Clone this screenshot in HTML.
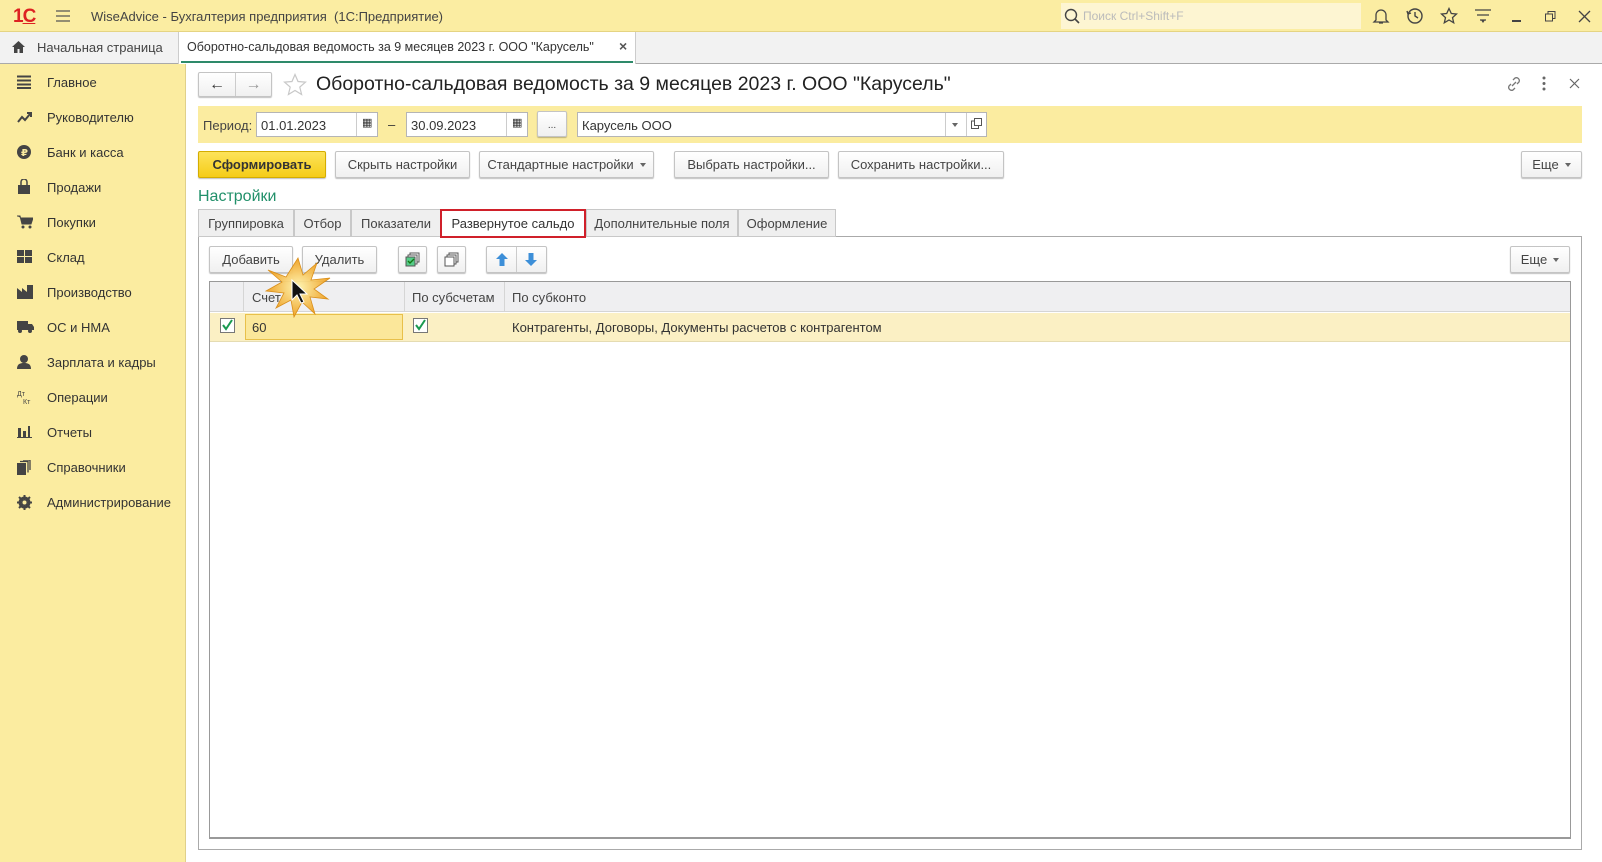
<!DOCTYPE html>
<html><head><meta charset="utf-8"><style>
*{box-sizing:border-box;margin:0;padding:0}
body{width:1602px;height:862px;overflow:hidden;background:#fff;font-family:"Liberation Sans","DejaVu Sans",sans-serif;font-size:13px;color:#333;position:relative}
.a{position:absolute}
.btn{position:absolute;border:1px solid #c4c4c4;border-radius:2px;background:linear-gradient(#fff,#f0f0f0);box-shadow:0 1px 1px rgba(0,0,0,.25);display:flex;align-items:center;justify-content:center;font-size:13px;color:#444;height:27px}
.inp{position:absolute;border:1px solid #b5b5b5;background:#fff;height:25px;font-size:13px;padding:5px 4px;color:#333}
.side div{position:absolute;left:47px;font-size:13px;color:#333}
.side svg{position:absolute;left:17px}
.tab{position:absolute;top:209px;height:28px;border:1px solid #c8c8c8;background:#efefef;font-size:13px;color:#444;display:flex;align-items:center;justify-content:center}
.caret{display:inline-block;border-left:3px solid transparent;border-right:3px solid transparent;border-top:4px solid #666;margin-left:6px;vertical-align:middle}
</style></head><body>
<!-- title bar -->
<div class="a" style="left:0;top:0;width:1602px;height:32px;background:#fbeda2;border-bottom:1px solid #e5d483"></div>
<div class="a" style="left:13px;top:6px;font:bold 19px 'Liberation Sans';color:#d22;letter-spacing:-1px">1<span style="text-decoration:underline">С</span></div>
<svg class="a" style="left:56px;top:10px" width="14" height="12"><path d="M0 1h14M0 6h14M0 11h14" stroke="#555" stroke-width="1.3"/></svg>
<div class="a" style="left:91px;top:9px;font-size:13px;color:#444">WiseAdvice - Бухгалтерия предприятия &nbsp;(1С:Предприятие)</div>
<div class="a" style="left:1061px;top:3px;width:300px;height:26px;background:#fdf5d2"></div>
<svg class="a" style="left:1064px;top:8px" width="16" height="16"><circle cx="7" cy="7" r="5.5" fill="none" stroke="#444" stroke-width="1.4"/><path d="M11 11l4 4" stroke="#444" stroke-width="1.6"/></svg>
<div class="a" style="left:1083px;top:9px;font-size:12px;color:#bbb">Поиск Ctrl+Shift+F</div>
<svg class="a" style="left:1372px;top:7px" width="18" height="18"><path d="M4 13V8a5 5 0 0 1 10 0v5l2 2H2zM7 16h4" fill="none" stroke="#444" stroke-width="1.3"/></svg>
<svg class="a" style="left:1406px;top:7px" width="18" height="18"><circle cx="9" cy="9" r="7" fill="none" stroke="#444" stroke-width="1.4"/><path d="M9 5v4l3 2M1 4l1 3 3-1" fill="none" stroke="#444" stroke-width="1.4"/></svg>
<svg class="a" style="left:1440px;top:7px" width="18" height="18"><path d="M9 1.5l2.3 5 5.2.5-4 3.6 1.2 5.2L9 13l-4.7 2.8 1.2-5.2-4-3.6 5.2-.5z" fill="none" stroke="#444" stroke-width="1.3"/></svg>
<svg class="a" style="left:1474px;top:8px" width="18" height="16"><path d="M1 2h16M3 7h12M6 12h6" stroke="#444" stroke-width="1.3"/><path d="M7 12l2 3 2-3z" fill="#444"/></svg>
<div class="a" style="left:1512px;top:20px;width:9px;height:1.5px;background:#444"></div>
<svg class="a" style="left:1545px;top:11px" width="11" height="11"><rect x="0.5" y="3" width="7" height="7" fill="none" stroke="#444"/><path d="M3 3V0.5h7v7H8" fill="none" stroke="#444"/></svg>
<svg class="a" style="left:1578px;top:10px" width="13" height="13"><path d="M1 1l11 11M12 1L1 12" stroke="#444" stroke-width="1.3"/></svg>
<!-- tab strip -->
<div class="a" style="left:0;top:32px;width:1602px;height:32px;background:#f2f2f2;border-bottom:1px solid #aaa"></div>
<svg class="a" style="left:11px;top:40px" width="15" height="14"><path d="M7.5 1L1 7h2v6h3.5V9h2v4H12V7h2z" fill="#444"/></svg>
<div class="a" style="left:37px;top:40px;font-size:13px;color:#444">Начальная страница</div>
<div class="a" style="left:178px;top:32px;width:458px;height:32px;background:#fff;border-left:1px solid #ccc;border-right:1px solid #ccc"></div>
<div class="a" style="left:181px;top:61px;width:452px;height:2px;background:#2e8a6a"></div>
<div class="a" style="left:187px;top:40px;font-size:12.5px;color:#333">Оборотно-сальдовая ведомость за 9 месяцев 2023 г. ООО "Карусель"</div>
<div class="a" style="left:619px;top:38px;font-size:14px;font-weight:bold;color:#555">×</div>
<!-- sidebar -->
<div class="a" style="left:0;top:64px;width:186px;height:798px;background:#fbeca0;border-right:1px solid #e0d08a"></div>
<div class="side">
<svg style="top:75px" width="14" height="14"><path d="M0 1.5h14M0 5.5h14M0 9.5h14M0 13h14" stroke="#444" stroke-width="2"/></svg><div style="top:75px">Главное</div>
<svg style="top:111px" width="15" height="12"><path d="M1 11l4-5 3 3 5-6M10 2h4v4" fill="none" stroke="#444" stroke-width="2"/></svg><div style="top:110px">Руководителю</div>
<svg style="top:145px" width="14" height="14"><circle cx="7" cy="7" r="7" fill="#444"/><text x="4" y="11" font-size="10" fill="#fbeca0" font-weight="bold">₽</text></svg><div style="top:145px">Банк и касса</div>
<svg style="top:179px" width="14" height="15"><path d="M1 6h12v9H1z" fill="#444"/><path d="M4 6V3a3 3 0 0 1 6 0v3" fill="none" stroke="#444" stroke-width="1.5"/></svg><div style="top:180px">Продажи</div>
<svg style="top:215px" width="16" height="14"><path d="M0 1h3l2 8h9l2-6H4" fill="#444" stroke="#444"/><circle cx="6" cy="12" r="1.5" fill="#444"/><circle cx="13" cy="12" r="1.5" fill="#444"/></svg><div style="top:215px">Покупки</div>
<svg style="top:250px" width="15" height="14"><path d="M0 0h7v6H0zM8 0h7v6H8zM0 7h7v6H0zM8 7h7v6H8z" fill="#444"/></svg><div style="top:250px">Склад</div>
<svg style="top:285px" width="16" height="14"><path d="M0 14V3l5 4V3l5 4V0h6v14z" fill="#444"/></svg><div style="top:285px">Производство</div>
<svg style="top:321px" width="17" height="12"><path d="M0 0h11v9H0zM11 3h4l2 3v3h-6z" fill="#444"/><circle cx="3" cy="10" r="2" fill="#444"/><circle cx="13" cy="10" r="2" fill="#444"/></svg><div style="top:320px">ОС и НМА</div>
<svg style="top:355px" width="14" height="14"><circle cx="7" cy="4" r="4" fill="#444"/><path d="M0 14c0-5 3-6 7-6s7 1 7 6z" fill="#444"/></svg><div style="top:355px">Зарплата и кадры</div>
<svg style="top:389px" width="16" height="16"><text x="0" y="7" font-size="7" fill="#444">Дт</text><text x="6" y="15" font-size="7" fill="#444">Кт</text></svg><div style="top:390px">Операции</div>
<svg style="top:426px" width="15" height="12"><path d="M1 2h3v9H1zM6 5h3v6H6zM11 0h2v11h-2zM0 11h15v1H0z" fill="#444"/></svg><div style="top:425px">Отчеты</div>
<svg style="top:460px" width="14" height="15"><path d="M0 3h9v12H0z" fill="#444"/><path d="M3 1.5h8v11M6 0h7v10" fill="none" stroke="#444" stroke-width="1.3"/></svg><div style="top:460px">Справочники</div>
<svg style="top:495px" width="15" height="15"><circle cx="7.5" cy="7.5" r="4.5" fill="none" stroke="#444" stroke-width="3"/><path d="M7.5 0v15M0 7.5h15M2 2l11 11M13 2L2 13" stroke="#444" stroke-width="2"/><circle cx="7.5" cy="7.5" r="2" fill="#fbeca0"/></svg><div style="top:495px">Администрирование</div>
</div>
<!-- title row -->
<div class="btn" style="left:198px;top:72px;width:74px;height:25px;padding:0"><span style="width:37px;text-align:center;font-size:16px;color:#333">←</span><span style="width:1px;height:23px;background:#ccc"></span><span style="width:36px;text-align:center;font-size:16px;color:#999">→</span></div>
<svg class="a" style="left:283px;top:73px" width="24" height="23"><path d="M12 1.5l3 7 7.5.6-5.7 5 1.8 7.4L12 17.5l-6.6 4 1.8-7.4-5.7-5L9 8.5z" fill="none" stroke="#c8c8c8" stroke-width="1.2"/></svg>
<div class="a" style="left:316px;top:73px;font-size:19.5px;color:#222">Оборотно-сальдовая ведомость за 9 месяцев 2023 г. ООО "Карусель"</div>
<svg class="a" style="left:1506px;top:76px" width="16" height="16"><path d="M6 10l4-4M7 4l2-2a3 3 0 0 1 4 4l-2 2M9 12l-2 2a3 3 0 0 1-4-4l2-2" fill="none" stroke="#777" stroke-width="1.3"/></svg>
<svg class="a" style="left:1542px;top:76px" width="4" height="15"><circle cx="2" cy="2" r="1.5" fill="#666"/><circle cx="2" cy="7.5" r="1.5" fill="#666"/><circle cx="2" cy="13" r="1.5" fill="#666"/></svg>
<svg class="a" style="left:1569px;top:78px" width="11" height="11"><path d="M1 1l9 9M10 1L1 10" stroke="#666" stroke-width="1.2"/></svg>
<!-- period bar -->
<div class="a" style="left:198px;top:106px;width:1384px;height:37px;background:#fbeca0"></div>
<div class="a" style="left:203px;top:118px;color:#444">Период:</div>
<div class="inp" style="left:256px;top:112px;width:122px">01.01.2023</div>
<div class="a" style="left:356px;top:113px;width:1px;height:23px;background:#ccc"></div>
<div class="a" style="left:362px;top:116px;font-size:11px">▦</div>
<div class="a" style="left:388px;top:117px">–</div>
<div class="inp" style="left:406px;top:112px;width:122px">30.09.2023</div>
<div class="a" style="left:506px;top:113px;width:1px;height:23px;background:#ccc"></div>
<div class="a" style="left:512px;top:116px;font-size:11px">▦</div>
<div class="btn" style="left:537px;top:111px;width:30px;height:26px;font-size:10px;align-items:flex-end;padding-bottom:5px">...</div>
<div class="inp" style="left:577px;top:112px;width:410px">Карусель ООО</div>
<div class="a" style="left:945px;top:113px;width:1px;height:23px;background:#ccc"></div>
<div class="a" style="left:966px;top:113px;width:1px;height:23px;background:#ccc"></div>
<div class="a" style="left:952px;top:123px;border-left:3px solid transparent;border-right:3px solid transparent;border-top:4px solid #666"></div>
<svg class="a" style="left:971px;top:118px" width="11" height="11"><rect x="3.5" y="0.5" width="7" height="7" fill="none" stroke="#555"/><path d="M3.5 3H0.5v7.5h7V7.5" fill="none" stroke="#555"/></svg>
<!-- buttons row -->
<div class="btn" style="left:198px;top:151px;width:128px;background:linear-gradient(#fde35a,#f5cc18);border-color:#d4ad00;font-weight:bold;color:#333">Сформировать</div>
<div class="btn" style="left:335px;top:151px;width:135px">Скрыть настройки</div>
<div class="btn" style="left:479px;top:151px;width:175px">Стандартные настройки<span class="caret"></span></div>
<div class="btn" style="left:674px;top:151px;width:155px">Выбрать настройки...</div>
<div class="btn" style="left:838px;top:151px;width:166px">Сохранить настройки...</div>
<div class="btn" style="left:1521px;top:151px;width:61px">Еще<span class="caret"></span></div>
<div class="a" style="left:198px;top:188px;font-size:16px;color:#21906a">Настройки</div>
<!-- tabs -->
<div class="a" style="left:198px;top:236px;width:1384px;height:614px;border:1px solid #aaa;background:#fff"></div>
<div class="tab" style="left:198px;width:96px">Группировка</div>
<div class="tab" style="left:294px;width:57px">Отбор</div>
<div class="tab" style="left:351px;width:90px">Показатели</div>
<div class="tab" style="left:440px;width:146px;background:#fff;border:2px solid #d0202a;height:29px;color:#333">Развернутое сальдо</div>
<div class="tab" style="left:586px;width:152px">Дополнительные поля</div>
<div class="tab" style="left:738px;width:98px">Оформление</div>
<!-- toolbar -->
<div class="btn" style="left:209px;top:246px;width:84px">Добавить</div>
<div class="btn" style="left:302px;top:246px;width:75px">Удалить</div>
<div class="btn" style="left:398px;top:246px;width:29px"><svg width="16" height="16"><rect x="5" y="1" width="9" height="9" fill="#fff" stroke="#555"/><rect x="3" y="3" width="9" height="9" fill="#fff" stroke="#555"/><rect x="1" y="5" width="9" height="9" fill="#5c8" stroke="#555"/><path d="M3 9l2 2 4-4" fill="none" stroke="#171" stroke-width="1.4"/></svg></div>
<div class="btn" style="left:437px;top:246px;width:29px"><svg width="16" height="16"><rect x="5" y="1" width="9" height="9" fill="#fff" stroke="#555"/><rect x="3" y="3" width="9" height="9" fill="#fff" stroke="#555"/><rect x="1" y="5" width="9" height="9" fill="#fff" stroke="#555"/></svg></div>
<div class="btn" style="left:486px;top:246px;width:61px;padding:0"><span style="width:30px;display:flex;justify-content:center"><svg width="12" height="13"><path d="M6 0L0 6h3.5v7h5V6H12z" fill="#3d8fd8"/></svg></span><span style="width:1px;height:25px;background:#ccc"></span><span style="width:30px;display:flex;justify-content:center"><svg width="12" height="13"><path d="M6 13L0 7h3.5V0h5v7H12z" fill="#3d8fd8"/></svg></span></div>
<div class="btn" style="left:1510px;top:246px;width:60px">Еще<span class="caret"></span></div>
<!-- table -->
<div class="a" style="left:209px;top:281px;width:1362px;height:558px;border:1px solid #999;border-bottom:2px solid #999;background:#fff"></div>
<div class="a" style="left:210px;top:282px;width:1360px;height:30px;background:#efeff1;border-bottom:1px solid #d5d5d5"></div>
<div class="a" style="left:243px;top:282px;width:1px;height:30px;background:#d5d5d5"></div>
<div class="a" style="left:404px;top:282px;width:1px;height:30px;background:#d5d5d5"></div>
<div class="a" style="left:504px;top:282px;width:1px;height:30px;background:#d5d5d5"></div>
<div class="a" style="left:252px;top:290px;color:#444">Счет</div>
<div class="a" style="left:412px;top:290px;color:#444">По субсчетам</div>
<div class="a" style="left:512px;top:290px;color:#444">По субконто</div>
<div class="a" style="left:210px;top:313px;width:1360px;height:29px;background:#fbf0c4;border-bottom:1px solid #e5dcb2"></div>
<div class="a" style="left:245px;top:314px;width:158px;height:26px;background:#fbe79a;border:1px solid #e8c04a"></div>
<div class="a" style="left:252px;top:320px;color:#333">60</div>
<div class="a" style="left:512px;top:320px;color:#333">Контрагенты, Договоры, Документы расчетов с контрагентом</div>
<svg class="a" style="left:220px;top:318px" width="15" height="15"><rect x="0.5" y="0.5" width="14" height="14" fill="#fff" stroke="#777"/><path d="M3 7l3 4 6-9" fill="none" stroke="#1a9a50" stroke-width="2"/></svg>
<svg class="a" style="left:413px;top:318px" width="15" height="15"><rect x="0.5" y="0.5" width="14" height="14" fill="#fff" stroke="#777"/><path d="M3 7l3 4 6-9" fill="none" stroke="#1a9a50" stroke-width="2"/></svg>
<!-- starburst + cursor -->
<svg class="a" style="left:262px;top:256px" width="72" height="62"><defs><radialGradient id="g"><stop offset="0" stop-color="#fff6b0"/><stop offset="1" stop-color="#f0a020"/></radialGradient></defs><path d="M36 2l5 17 14-12-6 17 19-2-16 11 14 10-18-2 5 17-13-12-8 15-3-17-15 8 8-15-18-2 16-9L6 14l18 7z" fill="url(#g)" stroke="#d88a10" stroke-width="0.8" opacity="0.95"/><path d="M30 24v20l5-5 4 8 3-1-4-8h7z" fill="#111" stroke="#fff" stroke-width="1"/></svg>
</body></html>
